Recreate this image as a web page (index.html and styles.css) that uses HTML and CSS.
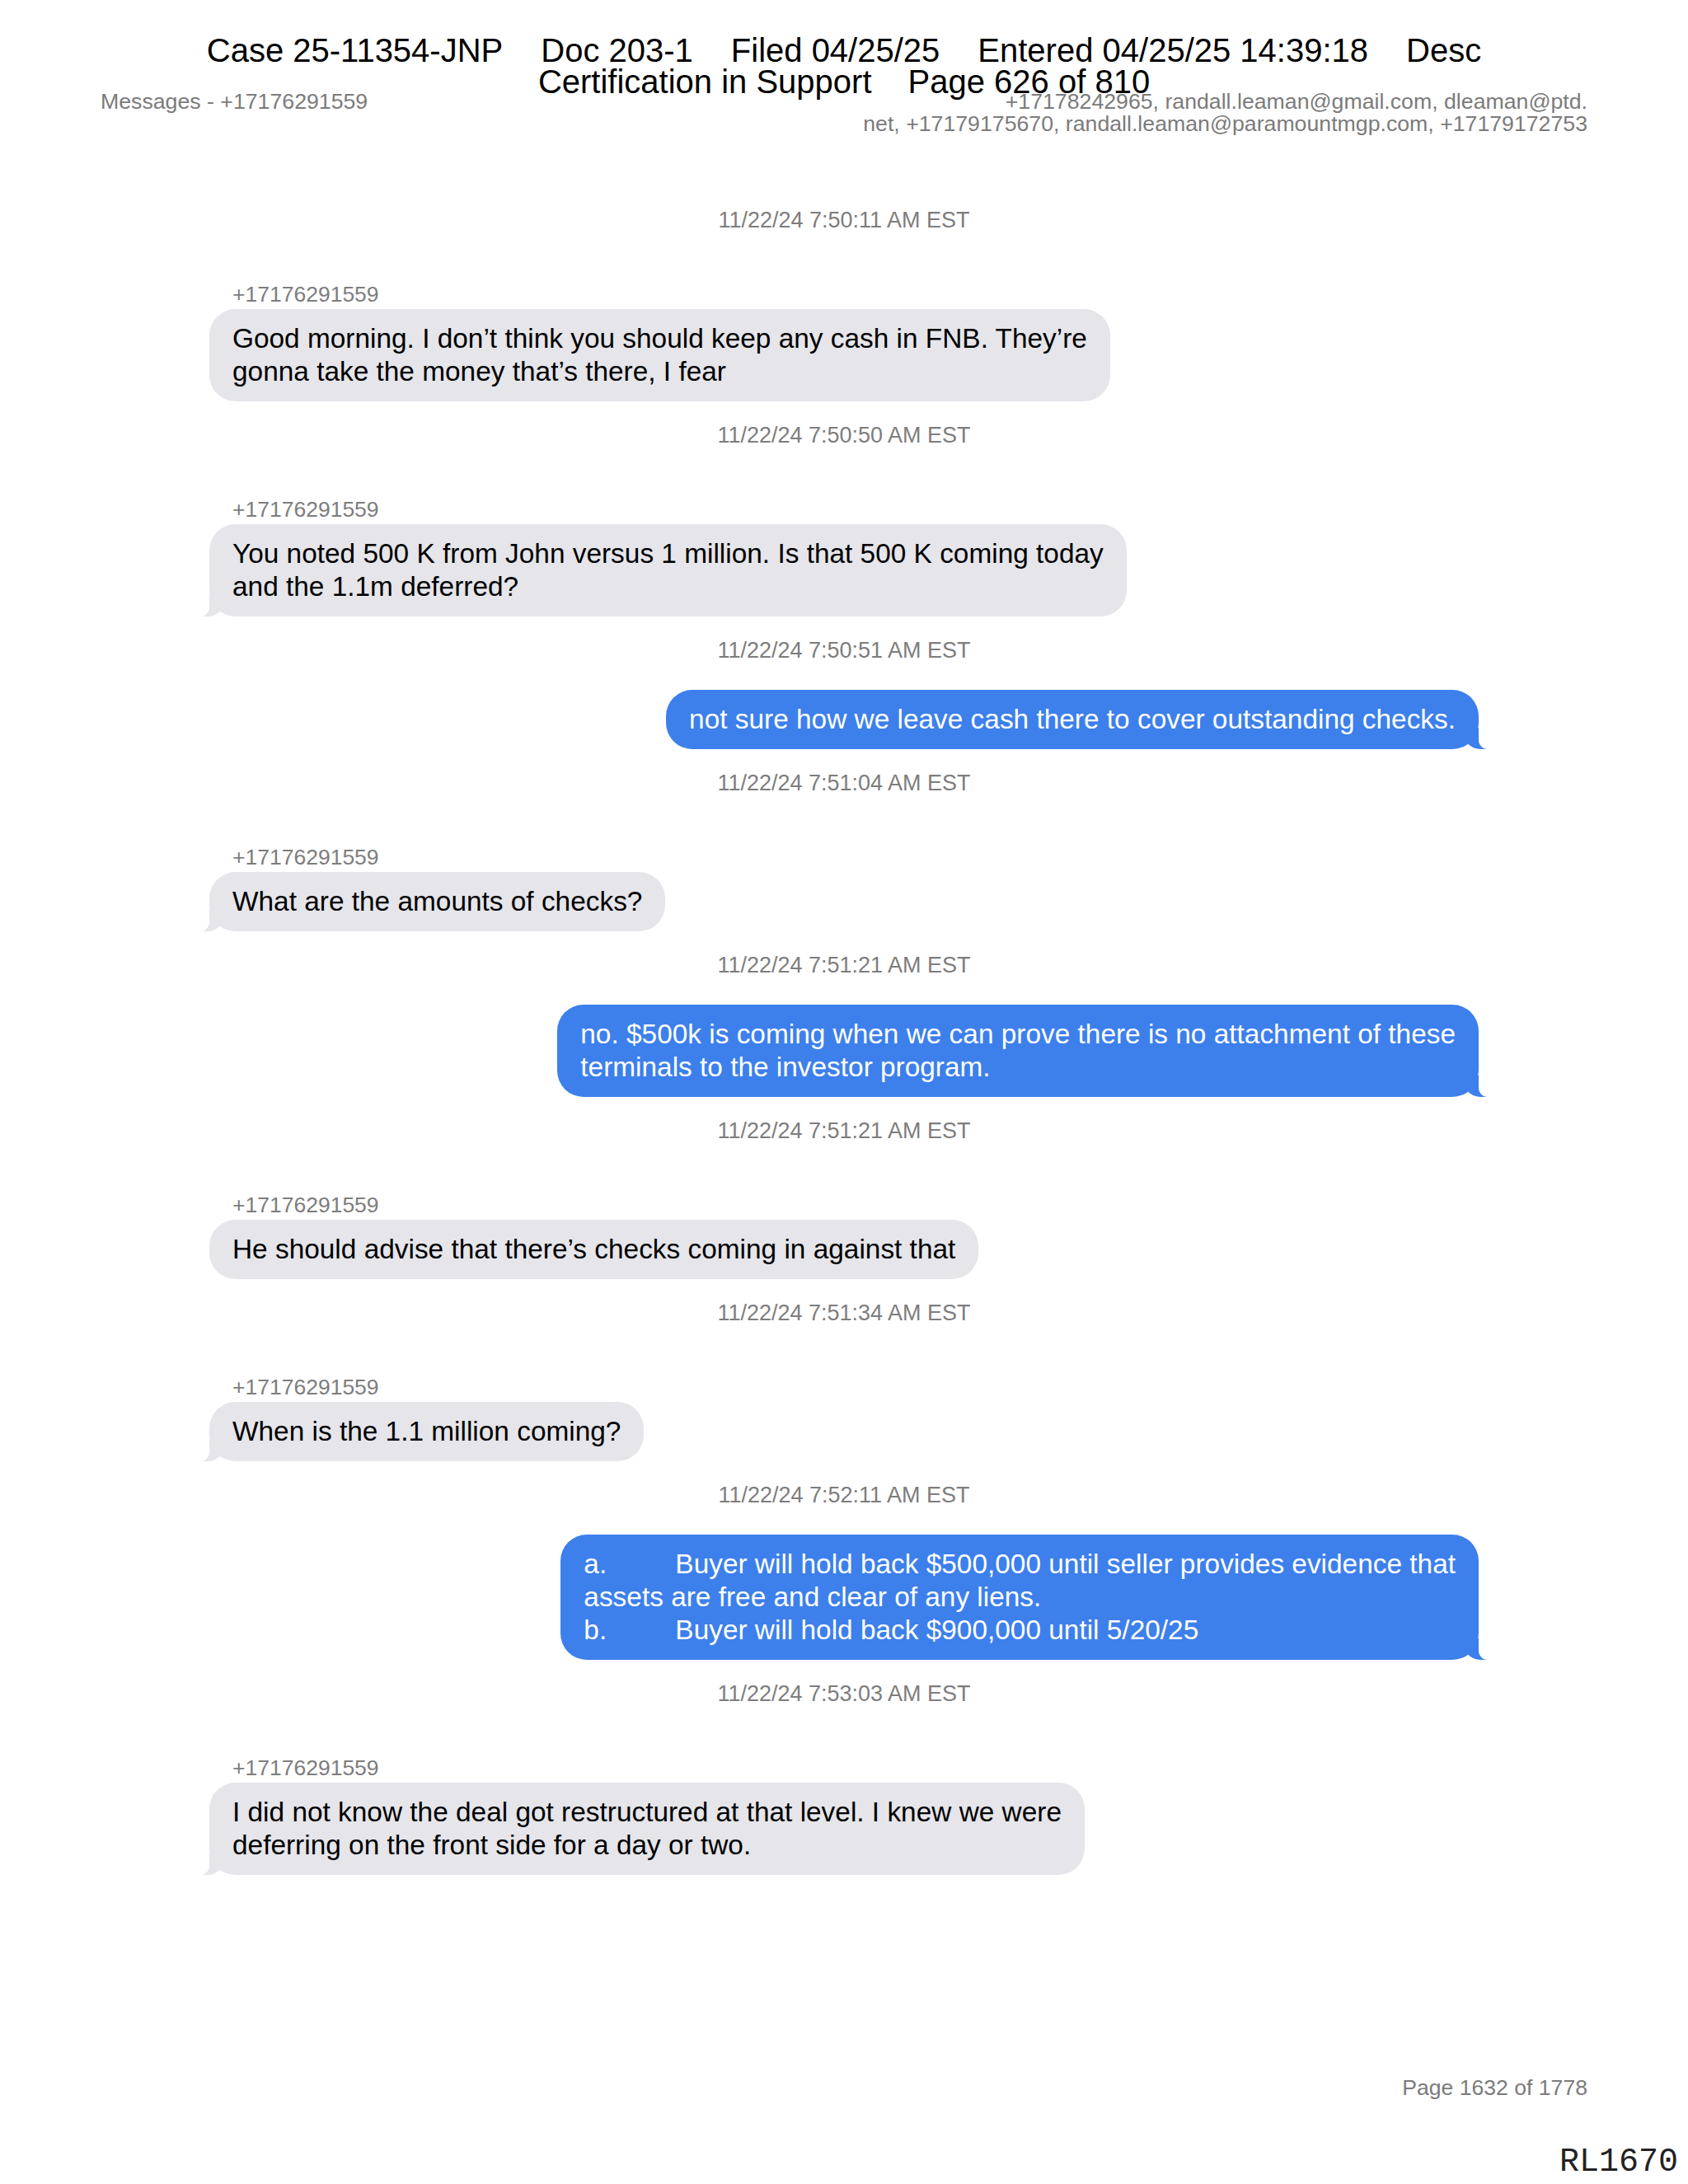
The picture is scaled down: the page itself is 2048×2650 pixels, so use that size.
FILE: index.html
```html
<!DOCTYPE html>
<html lang="en">
<head>
<meta charset="utf-8">
<title>Messages - +17176291559</title>
<link rel="stylesheet" href="styles.css">
</head>
<body>
<div class="page">
  <div class="stamp">
    <div class="stamp-line"><span>Case 25-11354-JNP</span><span>Doc 203-1</span><span>Filed 04/25/25</span><span>Entered 04/25/25 14:39:18</span><span>Desc</span></div>
    <div class="stamp-line stamp-line2"><span>Certification in Support</span><span>Page 626 of 810</span></div>
  </div>

  <header class="page-header">
    <div class="title">Messages - +17176291559</div>
    <div class="participants">+17178242965, randall.leaman@gmail.com, dleaman@ptd.<br>net, +17179175670, randall.leaman@paramountmgp.com, +17179172753</div>
  </header>

  <main class="thread">
    <div class="ts first">11/22/24 7:50:11 AM EST</div>
    <div class="msg recv">
      <div class="sender">+17176291559</div>
      <div class="bubble">Good morning. I don’t think you should keep any cash in FNB. They’re<br>gonna take the money that’s there, I fear</div>
    </div>

    <div class="ts">11/22/24 7:50:50 AM EST</div>
    <div class="msg recv">
      <div class="sender">+17176291559</div>
      <div class="bubble tail">You noted 500 K from John versus 1 million. Is that 500 K coming today<br>and the 1.1m deferred?</div>
    </div>

    <div class="ts">11/22/24 7:50:51 AM EST</div>
    <div class="msg sent">
      <div class="bubble tail">not sure how we leave cash there to cover outstanding checks.</div>
    </div>

    <div class="ts">11/22/24 7:51:04 AM EST</div>
    <div class="msg recv">
      <div class="sender">+17176291559</div>
      <div class="bubble tail">What are the amounts of checks?</div>
    </div>

    <div class="ts">11/22/24 7:51:21 AM EST</div>
    <div class="msg sent">
      <div class="bubble tail">no. $500k is coming when we can prove there is no attachment of these<br>terminals to the investor program.</div>
    </div>

    <div class="ts">11/22/24 7:51:21 AM EST</div>
    <div class="msg recv">
      <div class="sender">+17176291559</div>
      <div class="bubble">He should advise that there’s checks coming in against that</div>
    </div>

    <div class="ts">11/22/24 7:51:34 AM EST</div>
    <div class="msg recv">
      <div class="sender">+17176291559</div>
      <div class="bubble tail">When is the 1.1 million coming?</div>
    </div>

    <div class="ts">11/22/24 7:52:11 AM EST</div>
    <div class="msg sent">
      <div class="bubble tail"><span class="li">a.</span>Buyer will hold back $500,000 until seller provides evidence that<br>assets are free and clear of any liens.<br><span class="li">b.</span>Buyer will hold back $900,000 until 5/20/25</div>
    </div>

    <div class="ts">11/22/24 7:53:03 AM EST</div>
    <div class="msg recv">
      <div class="sender">+17176291559</div>
      <div class="bubble tail">I did not know the deal got restructured at that level. I knew we were<br>deferring on the front side for a day or two.</div>
    </div>
  </main>

  <footer class="page-footer">Page 1632 of 1778</footer>
  <div class="bates">RL1670</div>
</div>
</body>
</html>
```

FILE: styles.css
```css
html, body {
  margin: 0;
  padding: 0;
  background: #ffffff;
}

.page {
  position: relative;
  width: 2048px;
  height: 2650px;
  box-sizing: border-box;
  padding: 110px 122px 102px;
  display: flex;
  flex-direction: column;
  font-family: "Liberation Sans", Arial, sans-serif;
  color: #000;
}

/* court filing stamp overlaid on the page */
.stamp {
  position: absolute;
  top: 42px;
  left: 0;
  right: 0;
  font-size: 40px;
  line-height: 38px;
  color: #000;
}

.stamp-line {
  display: flex;
  justify-content: center;
  gap: 46px;
  white-space: nowrap;
}

.stamp-line2 {
  gap: 44px;
}

.page-header {
  display: flex;
  justify-content: space-between;
  align-items: flex-start;
  font-size: 26.7px;
  line-height: 27px;
  color: #7b7b7b;
}

.participants {
  text-align: right;
}

.thread {
  margin-top: 88px;
  padding: 0 132px;
  display: flex;
  flex-direction: column;
}

.ts {
  font-size: 27px;
  line-height: 30px;
  text-align: center;
  color: #7d7d7d;
  margin-top: 26px;
}

.ts.first {
  margin-top: 0;
}

.msg {
  display: flex;
  flex-direction: column;
}

.msg.recv {
  align-items: flex-start;
}

.msg.sent {
  align-items: flex-end;
}

.sender {
  margin-top: 60px;
  padding-left: 28px;
  font-size: 26.5px;
  line-height: 30px;
  color: #7d7d7d;
}

.bubble {
  position: relative;
  font-size: 33.4px;
  line-height: 40px;
  padding: 16px 28px;
  border-radius: 32px;
  white-space: nowrap;
}

.recv .bubble {
  margin-top: 3px;
  background: #e5e5ea;
  color: #000;
}

.sent .bubble {
  margin-top: 33px;
  background: #3d80ec;
  color: #fff;
}

.li {
  display: inline-block;
  width: 111px;
}

/* bubble tails */
.recv .bubble.tail::before {
  content: "";
  position: absolute;
  bottom: 0;
  left: -8px;
  width: 24px;
  height: 26px;
  background: #e5e5ea;
  border-bottom-right-radius: 18px 15px;
}

.recv .bubble.tail::after {
  content: "";
  position: absolute;
  bottom: 0;
  left: -28px;
  width: 28px;
  height: 27px;
  background: #fff;
  border-bottom-right-radius: 11px;
}

.sent .bubble.tail::before {
  content: "";
  position: absolute;
  bottom: 0;
  right: -12px;
  width: 28px;
  height: 26px;
  background: #3d80ec;
  border-bottom-left-radius: 18px 15px;
}

.sent .bubble.tail::after {
  content: "";
  position: absolute;
  bottom: 0;
  right: -32px;
  width: 32px;
  height: 27px;
  background: #fff;
  border-bottom-left-radius: 11px;
}

.page-footer {
  margin-top: auto;
  text-align: right;
  font-size: 26.6px;
  line-height: 30px;
  color: #7b7b7b;
}

/* Bates stamp */
.bates {
  position: absolute;
  right: 12px;
  bottom: 6px;
  font-family: "Liberation Mono", "Courier New", monospace;
  font-size: 40px;
  line-height: 40px;
  color: #222;
}
```
